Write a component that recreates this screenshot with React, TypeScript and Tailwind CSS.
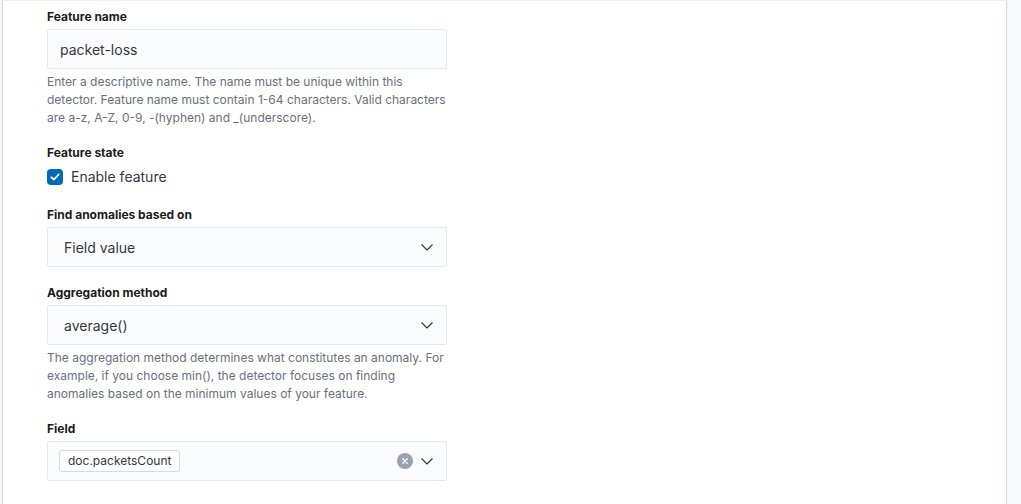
import type { ReactNode } from "react";

function Chevron() {
  return (
    <svg width="12" height="7" viewBox="0 0 12 7" fill="none" className="shrink-0">
      <path d="M0.5 0.5L6 6L11.5 0.5" stroke="#343741" strokeWidth="1.1" strokeLinejoin="round" />
    </svg>
  );
}

function FormRow({ label, help, children }: { label: string; help?: string; children: ReactNode }) {
  return (
    <div className="flex flex-col">
      <label className="mb-[2px] block text-[12px] font-bold leading-[20px] text-[#1a1c21]">{label}</label>
      {children}
      {help && <p className="mt-1 w-[400px] text-[12px] leading-[18px] text-[#69707d]">{help}</p>}
    </div>
  );
}

function SelectBox({ value }: { value: string }) {
  return (
    <div className="flex h-10 w-[400px] items-center justify-between rounded-[2px] border border-[#e4e8f0] bg-[#fbfcfd] pl-4 pr-[13px] text-[14px] text-[#343741]">
      <span>{value}</span>
      <Chevron />
    </div>
  );
}

export default function App() {
  return (
    <div
      className="flex h-[504px] overflow-hidden bg-[#f7f8fc] pl-[2px] pr-[14px]"
      style={{ fontFamily: "Inter, 'Noto Sans', sans-serif" }}
    >
      <div className="flex-1 border-x border-t border-x-[#d3dae6] border-t-[#eef0f4] bg-white pl-[44px] pt-[6px]">
        <div className="flex flex-col gap-4">
          <FormRow
            label="Feature name"
            help="Enter a descriptive name. The name must be unique within this detector. Feature name must contain 1-64 characters. Valid characters are a-z, A-Z, 0-9, -(hyphen) and _(underscore)."
          >
            <div className="flex h-10 w-[400px] items-center rounded-[2px] border border-[#e4e8f0] bg-[#fbfcfd] pl-3 text-[14px] text-[#343741]">
              packet-loss
            </div>
          </FormRow>

          <FormRow label="Feature state">
            <div className="flex h-6 items-center gap-2 pb-px">
              <span className="flex h-4 w-4 items-center justify-center rounded-[4px] bg-[#006bb8]">
                <svg width="10" height="8" viewBox="0 0 10 8" fill="none">
                  <path d="M1.2 4.2L3.8 6.6L8.8 1.4" stroke="white" strokeWidth="1.6" strokeLinecap="round" strokeLinejoin="round" />
                </svg>
              </span>
              <span className="text-[14px] text-[#343741]">Enable feature</span>
            </div>
          </FormRow>

          <FormRow label="Find anomalies based on">
            <SelectBox value="Field value" />
          </FormRow>

          <FormRow
            label="Aggregation method"
            help="The aggregation method determines what constitutes an anomaly. For example, if you choose min(), the detector focuses on finding anomalies based on the minimum values of your feature."
          >
            <SelectBox value="average()" />
          </FormRow>

          <FormRow label="Field">
            <div className="flex h-10 w-[400px] items-center justify-between rounded-[2px] border border-[#e4e8f0] bg-[#fbfcfd] pl-[11px] pr-[13px]">
              <span className="flex h-[22px] items-center rounded-[3px] border border-[#d3dae6] bg-white px-2 text-[12px] text-[#343741]">
                doc.packetsCount
              </span>
              <div className="flex items-center gap-2">
                <span className="flex h-4 w-4 items-center justify-center rounded-full bg-[#98a2b3]">
                  <svg width="6" height="6" viewBox="0 0 6 6" fill="none">
                    <path d="M0.8 0.8L5.2 5.2M5.2 0.8L0.8 5.2" stroke="white" strokeWidth="1.3" strokeLinecap="round" />
                  </svg>
                </span>
                <Chevron />
              </div>
            </div>
          </FormRow>
        </div>
      </div>
    </div>
  );
}
